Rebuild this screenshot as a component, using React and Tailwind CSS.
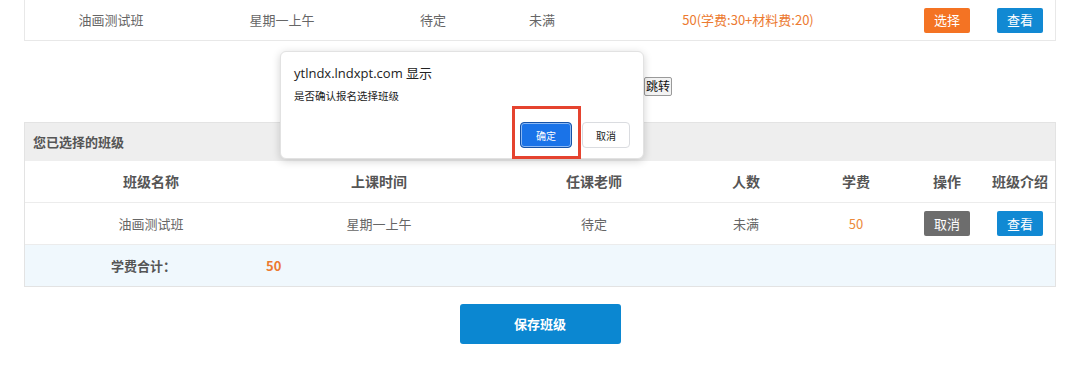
import React from 'react';

const cjk = "font-['Noto_Sans_CJK_SC','Noto_Sans',sans-serif]";

const Btn = ({ color, children }) => (
    <span className={`inline-flex h-[25px] w-[46px] items-center justify-center rounded-[2px] text-[13px] text-white ${color}`}>
        {children}
    </span>
);

export default function App() {
    return (
        <div className={`relative h-[380px] w-[1080px] overflow-hidden bg-white ${cjk}`}>
            <div className="mx-[24px]">
                {/* 可选班级 (只显示最后一行) */}
                <div className="grid h-[41px] grid-cols-[172px_170px_132px_86px_326px_72px_74px] items-center border-x border-b border-[#e8e8e8] text-center text-[13px] text-[#666]">
                    <span>油画测试班</span>
                    <span>星期一上午</span>
                    <span>待定</span>
                    <span>未满</span>
                    <span className="text-[#ec7a30]">50(学费:30+材料费:20)</span>
                    <span><Btn color="bg-[#f47323]">选择</Btn></span>
                    <span><Btn color="bg-[#1189d3]">查看</Btn></span>
                </div>

                {/* 分页 */}
                <div className="flex h-[81px] items-center">
                    <button className="ml-[620px] mt-[9px] h-[19px] rounded-[2px] border border-[#9a9a9a] bg-[#f3f3f3] px-[1px] text-[12px] font-normal leading-none text-[#111]">
                        跳转
                    </button>
                </div>

                {/* 已选班级 */}
                <div className="border border-[#e3e3e3]">
                    <div className="flex h-[38px] items-center bg-[#eeeeee] pl-[8px] text-[13px] font-bold text-[#555]">
                        您已选择的班级
                    </div>
                    <div className="grid h-[42px] grid-cols-[236px_236px_194px_110px_110px_72px_74px] items-center border-b border-[#ececec] text-center text-[14px] font-semibold text-[#555]">
                        <span className="pl-[16px]">班级名称</span>
                        <span>上课时间</span>
                        <span>任课老师</span>
                        <span>人数</span>
                        <span>学费</span>
                        <span>操作</span>
                        <span>班级介绍</span>
                    </div>
                    <div className="grid h-[42px] grid-cols-[236px_236px_194px_110px_110px_72px_74px] items-center border-b border-[#ececec] text-center text-[13px] text-[#666]">
                        <span className="pl-[16px]">油画测试班</span>
                        <span>星期一上午</span>
                        <span>待定</span>
                        <span>未满</span>
                        <span className="text-[#ec8a3a]">50</span>
                        <span><Btn color="bg-[#6d6d6d]">取消</Btn></span>
                        <span><Btn color="bg-[#1189d3]">查看</Btn></span>
                    </div>
                    <div className="flex h-[41px] items-center bg-[#f0f8fd] text-[13px] font-bold">
                        <span className="ml-[86px] w-[155px] text-[#555]">学费合计：</span>
                        <span className="text-[#ec7a30]">50</span>
                    </div>
                </div>

                <div className="mt-[17px] flex justify-center">
                    <button className="h-[40px] w-[161px] rounded-[3px] bg-[#0b87d1] text-[13px] font-bold text-white">
                        保存班级
                    </button>
                </div>
            </div>

            {/* 浏览器确认框 */}
            <div className="absolute left-[280px] top-[51px] h-[108px] w-[364px] rounded-[6px] border border-[#e2e2e2] bg-white shadow-[0_2px_8px_rgba(0,0,0,0.18)]">
                <div className="pl-[13px] pt-[12px] text-[13px] leading-[18px] text-[#222] font-['Open_Sans','Noto_Sans_CJK_SC',sans-serif]">
                    ytlndx.lndxpt.com 显示
                </div>
                <div className="mt-[7px] pl-[13px] text-[10.5px] leading-[14px] text-[#222]">
                    是否确认报名选择班级
                </div>
                <div className="mr-[13px] mt-[19px] flex justify-end gap-[10px]">
                    <button className="flex h-[26px] w-[52px] items-center justify-center rounded-[4px] border border-[#1452a8] bg-[#1a73e8] text-[10px] text-white shadow-[inset_0_0_0_1px_#ffffff80]">
                        确定
                    </button>
                    <button className="flex h-[26px] w-[48px] items-center justify-center rounded-[4px] border border-[#dadce0] bg-white text-[10px] text-[#222]">
                        取消
                    </button>
                </div>
            </div>

            {/* 红框标注 */}
            <div className="absolute left-[512px] top-[106px] h-[53px] w-[69px] border-[3px] border-[#e5432f]" />
        </div>
    );
}
